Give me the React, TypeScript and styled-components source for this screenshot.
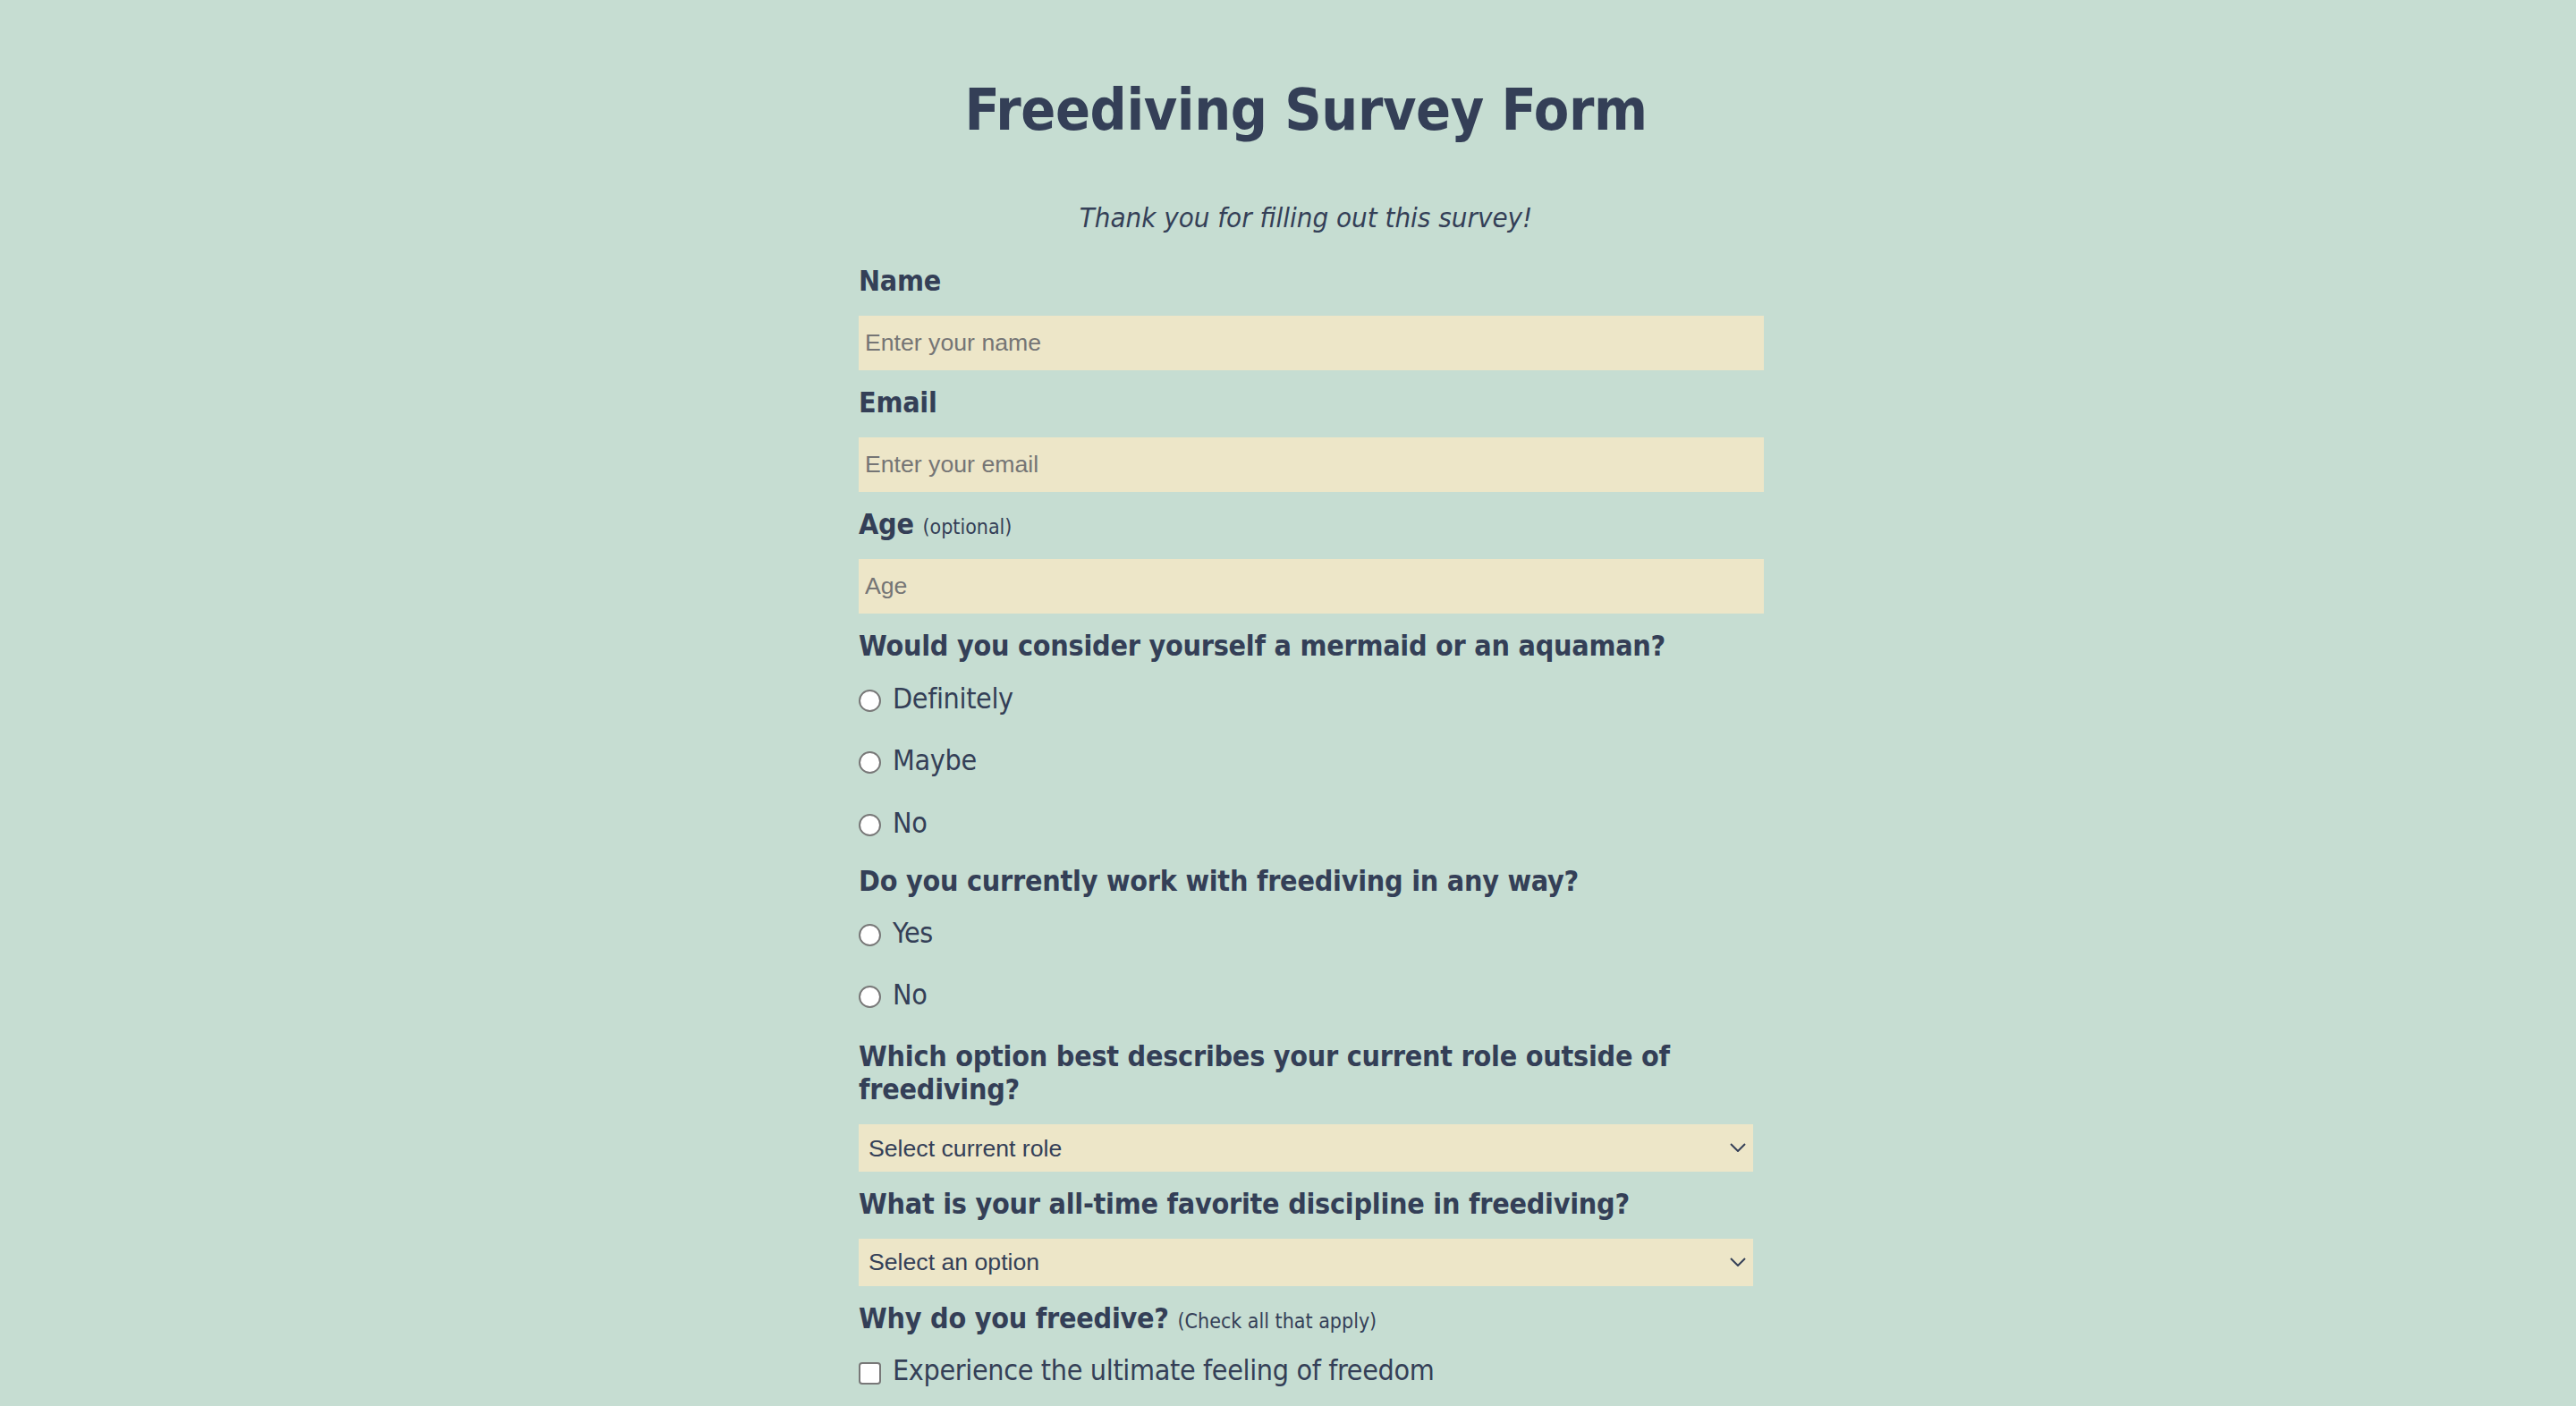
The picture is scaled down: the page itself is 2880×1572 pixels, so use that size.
import React from "react";
import styled, { createGlobalStyle } from "styled-components";

const ink = "#343f57";
const field = "#ede6c8";

const GlobalStyle = createGlobalStyle`
  html, body {
    margin: 0;
    padding: 0;
    background: #c6ddd2;
  }
  body {
    font-family: "DejaVu Sans Condensed", "DejaVu Sans", sans-serif;
    font-stretch: condensed;
    color: ${ink};
  }
`;

const Page = styled.main`
  min-height: 1572px;
  display: flex;
  justify-content: center;
  padding: 86px 0 40px 40px;
  box-sizing: border-box;
`;

const Form = styled.form`
  width: 1000px;
  display: flex;
  flex-direction: column;
`;

const Title = styled.h1`
  margin: 0;
  font-size: 64px;
  font-weight: bold;
  line-height: 75px;
  letter-spacing: -0.4px;
  text-align: center;
`;

const Subtitle = styled.p`
  margin: 64px 0 35px;
  font-size: 31px;
  font-style: italic;
  line-height: 36px;
  text-align: center;
`;

const Label = styled.label<{ $after?: number }>`
  display: block;
  font-size: 32px;
  font-weight: bold;
  line-height: 37px;
  letter-spacing: -0.25px;
  margin-bottom: ${(p) => p.$after ?? 19.5}px;
`;

const Hint = styled.span`
  font-size: 23px;
  font-weight: normal;
  line-height: 1;
  letter-spacing: 0;
`;

const TextInput = styled.input`
  display: block;
  width: 1012px;
  height: 61px;
  box-sizing: border-box;
  margin: 0 0 18.5px;
  padding: 0 7px;
  border: none;
  outline: none;
  background: ${field};
  font-family: "Liberation Sans", Arial, sans-serif;
  font-size: 26.67px;
  color: ${ink};
  &::placeholder {
    color: #757575;
  }
`;

const SelectWrap = styled.div<{ $after: number }>`
  position: relative;
  width: 1000px;
  height: 53px;
  margin-bottom: ${(p) => p.$after}px;
`;

const Select = styled.select`
  appearance: none;
  width: 100%;
  height: 100%;
  box-sizing: border-box;
  border: none;
  outline: none;
  padding: 0 40px 0 11px;
  background: ${field};
  font-family: "Liberation Sans", Arial, sans-serif;
  font-size: 26.67px;
  color: ${ink};
`;

const Chevron = styled.svg`
  position: absolute;
  right: 8px;
  top: 21px;
  width: 18px;
  height: 10px;
  pointer-events: none;
`;

const Options = styled.div<{ $after: number }>`
  display: flex;
  flex-direction: column;
  gap: 32.5px;
  margin-bottom: ${(p) => p.$after}px;
`;

const Option = styled.label`
  display: flex;
  align-items: center;
  font-size: 32px;
  line-height: 37px;
  letter-spacing: -0.35px;
`;

const Radio = styled.input`
  appearance: none;
  box-sizing: border-box;
  width: 25px;
  height: 25px;
  margin: 4px 13px 0 0;
  flex: none;
  border: 2px solid #787878;
  border-radius: 50%;
  background: #fff;
  &:checked {
    border: 7px solid #3b6fd6;
  }
`;

const Check = styled.input`
  appearance: none;
  box-sizing: border-box;
  width: 25px;
  height: 25px;
  margin: 5px 13px 0 0;
  flex: none;
  border: 2px solid #787878;
  border-radius: 4px;
  background: #fff;
  &:checked {
    background: #3b6fd6;
    border-color: #3b6fd6;
  }
`;

const ChevronIcon = () => (
  <Chevron viewBox="0 0 18 10">
    <path d="M1 1 L9 9 L17 1" fill="none" stroke={ink} strokeWidth="2" />
  </Chevron>
);

export default function App() {
  return (
    <>
      <GlobalStyle />
      <Page>
        <Form>
          <Title>Freediving Survey Form</Title>
          <Subtitle>Thank you for filling out this survey!</Subtitle>

          <Label htmlFor="name">Name</Label>
          <TextInput id="name" type="text" placeholder="Enter your name" />

          <Label htmlFor="email">Email</Label>
          <TextInput id="email" type="email" placeholder="Enter your email" />

          <Label htmlFor="age">
            Age <Hint>(optional)</Hint>
          </Label>
          <TextInput id="age" type="number" placeholder="Age" />

          <Label $after={21.5}>Would you consider yourself a mermaid or an aquaman?</Label>
          <Options $after={28}>
            <Option>
              <Radio type="radio" name="mer" />
              Definitely
            </Option>
            <Option>
              <Radio type="radio" name="mer" />
              Maybe
            </Option>
            <Option>
              <Radio type="radio" name="mer" />
              No
            </Option>
          </Options>

          <Label $after={21}>Do you currently work with freediving in any way?</Label>
          <Options $after={31.5}>
            <Option>
              <Radio type="radio" name="work" />
              Yes
            </Option>
            <Option>
              <Radio type="radio" name="work" />
              No
            </Option>
          </Options>

          <Label htmlFor="role" $after={20.5}>
            Which option best describes your current role outside of freediving?
          </Label>
          <SelectWrap $after={17.7}>
            <Select id="role" defaultValue="">
              <option value="" disabled>
                Select current role
              </option>
              <option>Student</option>
              <option>Full-time job</option>
              <option>Part-time job</option>
              <option>Other</option>
            </Select>
            <ChevronIcon />
          </SelectWrap>

          <Label htmlFor="discipline" $after={20.3}>
            What is your all-time favorite discipline in freediving?
          </Label>
          <SelectWrap $after={18.4}>
            <Select id="discipline" defaultValue="">
              <option value="" disabled>
                Select an option
              </option>
              <option>Constant Weight</option>
              <option>Free Immersion</option>
              <option>Static Apnea</option>
              <option>Dynamic Apnea</option>
            </Select>
            <ChevronIcon />
          </SelectWrap>

          <Label $after={21}>
            Why do you freedive? <Hint>(Check all that apply)</Hint>
          </Label>
          <Options $after={0}>
            <Option>
              <Check type="checkbox" />
              Experience the ultimate feeling of freedom
            </Option>
          </Options>
        </Form>
      </Page>
    </>
  );
}
